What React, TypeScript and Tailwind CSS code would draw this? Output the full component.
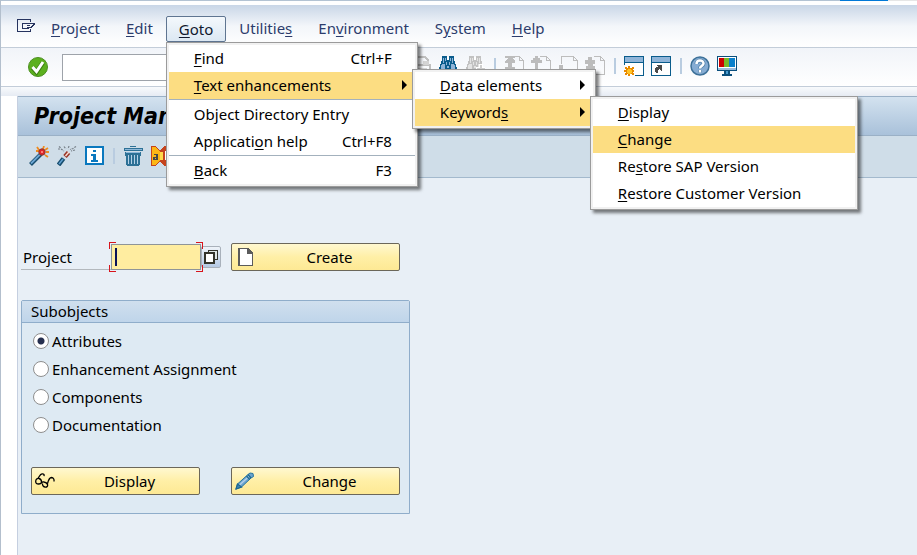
import React, { useState } from "react";

function Svg({ children, className = "", w = 20, h = 20, crisp = true }: { children: React.ReactNode; className?: string; w?: number; h?: number; crisp?: boolean }) {
  return (
    <svg width={w} height={h} viewBox={`0 0 ${w} ${h}`} fill="none" shapeRendering={crisp ? "crispEdges" : "auto"} className={`shrink-0 ${className}`} aria-hidden="true">
      {children}
    </svg>
  );
}

const CommandIcon = () => (
  <Svg w={18} h={14}>
    <path d="M13.500 3V.5H.5v12h13V10" stroke="#26335f" />
    <path d="M5.500 9.500v-5h12v1h-1v1h-1v1h-1v1h-4.500M5.500 9.500h6v-2M10 6.500h3" stroke="#26335f" />
  </Svg>
);

const CheckIcon = () => (
  <Svg crisp={false}>
    <circle cx="10" cy="10" r="9.500" fill="#5cb01e" stroke="#4c8f22" />
    <path d="M4.500 10.500l4 4.500 6.500-9.500" stroke="#3c7d12" strokeWidth="4.500" />
    <path d="M4.500 10l4 4.500 6.500-9.500" stroke="#fff" strokeWidth="3" />
  </Svg>
);

const PrinterIcon = () => (
  <Svg>
    <path d="M5.500 6.500v-6h8l3 3v3M1.500 8.500h17v8h-17z" stroke="#c0c0c0" strokeWidth="2" />
    <path d="M12 5h6v4h-6zM4 12h12v7H4z" fill="#d4d4d4" />
  </Svg>
);

function Binoculars({ dark, light, plus }: { dark: string; light: string; plus?: boolean }) {
  return (
    <Svg>
      <path d="M4 0h5v4h2V0h5v5h1v3h1v3h1v8h-7v-5H8v5H1v-8h1V8h1V5h1z" fill={dark} />
      <path d="M5 2h1v5H5zM7 2h1v3H7zM12 2h1v3h-1zM14 2h1v5h-1zM4 8h3v5H3V9h1zM13 8h3v1h1v4h-4zM8 6h1v3H8zM11 6h1v3h-1zM9 10h2v2H9zM3 14h3v3H3zM14 14h3v3h-3z" fill={light} />
      <path d="M9 1h2v3H9z" fill="#fff" />
      {plus && <path d="M14 8h3v3h3v3h-3v3h-3v-3h-3v-3h3z" fill="#cfcfcf" stroke="#fff" strokeWidth="1" />}
    </Svg>
  );
}

function PageIcon({ kind }: { kind: "first" | "prev" | "next" | "last" }) {
  return (
    <Svg>
      <path d="M9 .5h6.500l4 4V18.500H6v-2M15.500.5v4h4" stroke="#bdbdbd" />
      {kind === "first" && <path d="M1 0h10v2H8l3 3v2H8v4H4V7H1V5l3-3H1zM4 9h4v2h3v4H1v-4h3z" fill="#bcbcbc" />}
      {kind === "prev" && <path d="M4 0h3v2h2v2h2v3H7v6H4V7H0V4h2V2h2z" fill="#bcbcbc" />}
      {kind === "next" && <path d="M3.500 8V.5H10" stroke="#bdbdbd" />}
      {kind === "next" && <path d="M1 9h4v7h4v2H0v-2h1z" fill="#bcbcbc" />}
      {kind === "last" && <path d="M3 1h4v3h3v4H8v2h2v3H1v-3h2V8H0V4h3z" fill="#bcbcbc" />}
    </Svg>
  );
}

const NewSessionIcon = () => (
  <Svg>
    <path d="M1 1h18v18H1z" fill="#fff" />
    <path d="M1 1h18v5H1z" fill="#8fb4d8" />
    <path d="M.5 9V.5h19v19H11M1 6.500h18" stroke="#0a5c8c" />
    <path d="M4 10h2v2h2v-1h2v2H9v1h1v2H9v1h1v2H8v-1H6v2H4v-2H3v1H1v-2h1v-1H0v-2h2v-1H1v-2h2v1h1z" fill="#e88a00" />
    <path d="M4 13h3v1h1v3H7v1H4v-1H3v-3h1z" fill="#ffc425" />
  </Svg>
);

const ShortcutIcon = () => (
  <Svg>
    <path d="M.5.5h19v19H.5z" fill="#fff" stroke="#0a5c8c" />
    <path d="M1 1h18v5H1z" fill="#8fb4d8" />
    <path d="M1 6.500h18" stroke="#0a5c8c" />
    <path d="M5 9h6v6h-1v-1H9v-1H8v1H7v3H5v-1H4v-4h1v-1h2v-1H6v-1H5z" fill="#4a4a4a" />
  </Svg>
);

const HelpIcon = () => (
  <Svg crisp={false}>
    <circle cx="10" cy="10" r="9" fill="#86acd3" stroke="#3d7199" strokeWidth="1.500" />
    <path d="M6.500 8c0-4.500 7-4.500 7-.5 0 2.500-3.500 2.300-3.500 5M10 14v2.500" stroke="#4d7ea8" strokeWidth="4" />
    <path d="M6.500 8c0-4.500 7-4.500 7-.5 0 2.500-3.500 2.300-3.500 5M10 14v2.500" stroke="#fff" strokeWidth="2.500" />
  </Svg>
);

const MonitorIcon = () => (
  <Svg>
    <path d="M.5.500h19v13H.5z" fill="#fff" stroke="#0a4f7d" />
    <path d="M2 2h6v9H2z" fill="#cc0000" />
    <path d="M7 2h5v9H7z" fill="#76b82a" />
    <path d="M12 2h6v9h-6z" fill="#0a80cc" />
    <path d="M1 12h18v2H1z" fill="#9cbcdc" />
    <path d="M0 14h20v1H0zM7 15h6v3h2v2H5v-2h2z" fill="#0a4f7d" />
    <path d="M9 15h2v3H9z" fill="#4a9bd0" />
  </Svg>
);

const WandIcon = () => (
  <Svg crisp={false}>
    <path d="M1.500 18.500L12 8" stroke="#174d6e" strokeWidth="4" />
    <path d="M2 17.500L11 8.500" stroke="#6da6d4" strokeWidth="1.800" />
    <path d="M8 1l2 3M15 0l-1 3M19 2l-3 2M20 6h-3M19 11l-3-2M7 5h3" stroke="#f08b1d" strokeWidth="1.800" />
    <circle cx="13" cy="6" r="3.200" fill="#e0242b" stroke="#8d3a2c" />
    <circle cx="13" cy="6" r="1" fill="#ff9b8c" />
  </Svg>
);

const WandOffIcon = () => (
  <Svg crisp={false}>
    <path d="M1.500 19l5-6.500" stroke="#174d6e" strokeWidth="4.500" />
    <path d="M2 18l4-5" stroke="#5f9fd0" strokeWidth="1.500" />
    <path d="M8 10.500l3.500-4" stroke="#9a3424" strokeWidth="4.500" />
    <path d="M8.500 10l3.500-4" stroke="#f6dcd4" strokeWidth="1.500" />
    <path d="M2 .5l2 1.500M7 .5L9 3M1 3h3l3 2M12 0l-1 3M19 .5l-3 2-3 1M18 4l-4 1" stroke="#767f87" strokeWidth="1.200" strokeDasharray="2 1" />
  </Svg>
);

const InfoIcon = () => (
  <Svg>
    <path d="M1 1h17v17H1z" fill="#fff" stroke="#0a78be" strokeWidth="2" />
    <path d="M8 4h3v2H8zM6 8h5v6h2v2H6v-2h2v-4H6z" fill="#0a78be" />
  </Svg>
);

const TrashIcon = () => (
  <Svg>
    <path d="M2 6h16v4h-1v9h-1v1H4v-1H3v-9H2z" fill="#2d7196" />
    <path d="M7 .5h6M1 2.500h18v2H1z" fill="#8db8da" stroke="#2d7196" />
    <path d="M5.500 9v9M8.500 9v9M11.500 9v9M14.500 9v9" stroke="#b5d1e7" />
    <path d="M3 6.500h14" stroke="#8db8da" />
  </Svg>
);

const RenameIcon = () => (
  <Svg>
    <path d="M0 0h4l4 4h1l4-4h7v20h-7l-4-4H8l-4 4H0z" fill="#c5431d" />
    <path d="M1 1h3l5 5v8l-5 5H1z" fill="#fcb614" />
    <path d="M9 6h3v8H9z" fill="#ffd94a" />
    <path d="M3 8h4v6H2v-3h3V9H3zM4 12v1h1v-1z" fill="#474747" />
    <path d="M14 5h2v3h3v6h-5zM16 10v2h1v-2z" fill="#fff" />
  </Svg>
);

const NewPageIcon = () => (
  <Svg w={15} h={18}>
    <path d="M1 1h9l4 4v12H1z" fill="#fff" />
    <path d="M0 0h10l5 5v13H0zM2 1v16h12V6H9V1z" fill="#5b5b5b" fillRule="evenodd" />
  </Svg>
);

const GlassesIcon = () => (
  <Svg crisp={false} h={16}>
    <path d="M.7 8.500c0-2 1.500-3.500 3.300-3 2 .5 2.500 2 2.500 3.500s-1.500 2-3 2S.7 10.500.7 8.500zM3 5.500C4.500 3.500 5 1 7 .8s2.300 1 2 2.400M6.500 10c.5-1 1.300-1.300 2.500-1 1.500.2 3 1 3.500 2.500.5 1.700-.7 2.700-2.200 2.600-1.800-.1-3-1.600-2.800-3.600M12.500 10.500c.8-3 2-6 4-6 2 .200 2.800 1.700 2.500 4" stroke="#000" strokeWidth="1.300" />
  </Svg>
);

const PencilIcon = () => (
  <Svg crisp={false} h={18}>
    <path d="M1 17l1.500-5L13 2.500 15 1l3 .5.500 3L16 6 6.500 15z" fill="#6ba4cf" stroke="#27759f" />
    <path d="M4.500 13L14.500 4" stroke="#b3d0ea" strokeWidth="1.500" />
    <path d="M1 17l1.500-5L6.500 15zM13 2.500L16 6M11.500 4l3.200 3.500" stroke="#1d6890" fill="#3f87b4" strokeWidth="1.200" />
  </Svg>
);

const MatchcodeIcon = () => (
  <Svg w={14} h={14}>
    <path d="M4.500.5h9v9h-9z" fill="#dfe6e6" stroke="#33332b" />
    <path d="M1 3h9v10H1z" fill="#fff" stroke="#33332b" strokeWidth="2" />
  </Svg>
);

/** Renders a caption in which the letter after "&" is the underlined access key. */
function Caption({ text }: { text: string }) {
  const i = text.indexOf("&");
  if (i < 0) return <span>{text}</span>;
  return (
    <span>
      {text.slice(0, i)}
      <u className="underline-offset-2 decoration-1">{text[i + 1]}</u>
      {text.slice(i + 2)}
    </span>
  );
}

type Entry = { label: string; keys?: string; sep?: boolean; active?: boolean; arrow?: boolean; sub?: React.ReactNode };

function Menu({ entries, className }: { entries: Entry[]; className: string }) {
  return (
    <div className={`absolute z-10 border border-[#9b9b9b] bg-[#f1f1f1] p-[2px] shadow-[3px_3px_3px_0px_#00000080] ${className}`}>
      <ul role="menu" className="bg-white">
        {entries.map((e) => (
          <li key={e.label} role="none" className={`relative ${e.sep ? "mb-px border-b border-[#a3b1bd]" : ""}`}>
            <button role="menuitem" type="button" className={`flex h-[27px] w-full items-center pl-[25px] text-left text-black ${e.arrow ? "pr-2" : "pr-[23px]"} ${e.active ? "bg-[#fcdd82]" : ""}`}>
              <span className="flex-1 whitespace-nowrap"><Caption text={e.label} /></span>
              {e.keys && <span>{e.keys}</span>}
              {e.arrow && (
                <Svg w={5} h={10} crisp={false}>
                  <path d="M0 0l5 5-5 5z" fill="#000" />
                </Svg>
              )}
            </button>
            {e.sub}
          </li>
        ))}
      </ul>
    </div>
  );
}

const keywordsMenu = (
  <Menu
    className="left-[175px] top-[-3px] w-[268px]"
    entries={[{ label: "&Display" }, { label: "&Change", active: true }, { label: "Re&store SAP Version" }, { label: "&Restore Customer Version" }]}
  />
);

const textMenu = (
  <Menu
    className="left-[243px] top-[-3px] w-[184px]"
    entries={[{ label: "&Data elements", arrow: true }, { label: "Keyword&s", active: true, arrow: true, sub: keywordsMenu }]}
  />
);

const gotoMenu = (
  <Menu
    className="left-0 top-[26px] w-[252px]"
    entries={[
      { label: "&Find", keys: "Ctrl+F" },
      { label: "&Text enhancements", active: true, sep: true, arrow: true, sub: textMenu },
      { label: "Object Directory Entry" },
      { label: "Applicati&on help", keys: "Ctrl+F8", sep: true },
      { label: "&Back", keys: "F3" },
    ]}
  />
);

function ToolButton({ label, children }: { label: string; children: React.ReactNode }) {
  return <button type="button" aria-label={label} className="shrink-0">{children}</button>;
}

function Divider({ className = "" }: { className?: string }) {
  return <span className={`h-4 w-[2px] shrink-0 bg-[#b9cce0] ${className}`} />;
}

function YellowButton({ icon, children }: { icon: React.ReactNode; children: React.ReactNode }) {
  return (
    <button type="button" className="flex h-7 w-[169px] items-center rounded-xs border border-[#6b675a] bg-linear-to-b from-[#fff8d0] via-[#ffefa6] to-[#fde994] px-[3px] text-black">
      <span className="flex w-5 justify-center">{icon}</span>
      <span className="flex-1 pl-2 text-center">{children}</span>
    </button>
  );
}

const menus = ["&Project", "&Edit", "&Goto", "Utilitie&s", "En&vironment", "S&ystem", "&Help"];
const subobjects = ["Attributes", "Enhancement Assignment", "Components", "Documentation"];

export default function App() {
  const [choice, setChoice] = useState("Attributes");
  return (
    <div className="flex min-h-screen flex-col overflow-hidden border-l border-[#b3bfcd] bg-white font-['Noto_Sans','Open_Sans',sans-serif] text-[15px] leading-5 text-black">
      <div className="flex h-px bg-[#b3c3d3]">
        <span className="ml-auto w-12 bg-[#0078d7]" />
        <span className="w-[29px] bg-[#e6e6e6]" />
      </div>
      <nav className="mt-1 flex h-[42px] items-center bg-linear-to-b from-[#c9d6e7] via-[#f3f6fa] via-50% to-white pl-4">
        <button type="button" aria-label="Menu" className="mb-0"><CommandIcon /></button>
        <ul className="ml-[3px] flex pt-[5px]">
          {menus.map((m) => (
            <li key={m} className="relative">
              <button
                type="button"
                className={`flex h-[26px] items-center rounded-xs border px-3 ${m === "&Goto" ? "border-[#5f7591] bg-linear-to-b from-[#f4f8fc] to-[#dce8f3] text-[#10182e]" : "border-transparent pb-px text-[#2c3c6c]"}`}
              >
                <Caption text={m} />
              </button>
              {m === "&Goto" && gotoMenu}
            </li>
          ))}
        </ul>
      </nav>
      <div className="flex h-10 items-center gap-[7px] border-y border-[#c3cdd9] bg-linear-to-b from-[#f1f4f9] to-white pl-[27px]">
        <ToolButton label="Enter"><CheckIcon /></ToolButton>
        <input aria-label="Command" className="ml-[7px] h-[27px] w-[342px] border border-[#9ea3aa] bg-white px-1" />
        <div className="flex items-center gap-[7px] pb-[2px]">
          <ToolButton label="Print"><PrinterIcon /></ToolButton>
          <ToolButton label="Find"><Binoculars dark="#0a5c8c" light="#8fb4d8" /></ToolButton>
          <ToolButton label="Find next"><Binoculars dark="#c2c2c2" light="#e4e4e4" plus /></ToolButton>
          <Divider className="ml-[2px] mr-px" />
          <ToolButton label="First page"><PageIcon kind="first" /></ToolButton>
          <ToolButton label="Previous page"><PageIcon kind="prev" /></ToolButton>
          <ToolButton label="Next page"><PageIcon kind="next" /></ToolButton>
          <ToolButton label="Last page"><PageIcon kind="last" /></ToolButton>
          <Divider className="ml-[2px] mr-px" />
          <ToolButton label="New session"><NewSessionIcon /></ToolButton>
          <ToolButton label="Create shortcut"><ShortcutIcon /></ToolButton>
          <Divider className="ml-[2px] mr-px" />
          <ToolButton label="Help"><HelpIcon /></ToolButton>
          <ToolButton label="Customize layout"><MonitorIcon /></ToolButton>
        </div>
      </div>
      <div className="h-[9px] bg-linear-to-b from-[#f8fafc] to-[#e6ebf3]" />
      <div className="ml-4 flex flex-1 flex-col border-l border-[#c5cfe0] bg-[#e8eff6]">
        <header className="flex h-10 items-center border-y border-[#9ab0c6] bg-linear-to-b from-[#d3e2ef] to-[#a9c1da] pl-4">
          <h1 className="font-['DejaVu_Sans_Condensed','DejaVu_Sans',sans-serif] text-[23px] font-bold italic leading-7">Project Management</h1>
        </header>
        <div className="flex h-[42px] items-center gap-2 border-b border-[#a3b9cd] bg-[#cfdde8] pb-[2px] pl-[11px]">
          <ToolButton label="Activate"><WandIcon /></ToolButton>
          <ToolButton label="Deactivate"><WandOffIcon /></ToolButton>
          <ToolButton label="Information"><InfoIcon /></ToolButton>
          <Divider />
          <ToolButton label="Delete"><TrashIcon /></ToolButton>
          <ToolButton label="Rename"><RenameIcon /></ToolButton>
        </div>
        <main className="flex flex-col items-start gap-[29px] pl-[3px] pt-[65px]">
          <div className="flex items-center">
            <label htmlFor="project" className="flex h-[26px] w-[90px] items-center border-b border-[#b3b8bd] pl-[2px]">Project</label>
            <div className="relative">
              <input id="project" className="block h-[26px] w-[90px] border border-[#8f9598] bg-[#ffeda0] px-1" />
              <span className="absolute left-1 top-[4px] h-[18px] w-[2px] bg-[#0b1258]" />
              <svg className="absolute left-[-2px] top-[-2px]" width="94" height="30" viewBox="0 0 94 30" fill="none" shapeRendering="crispEdges" aria-hidden="true">
                <path d="M.5 7V.5H7M87 .5h6.500V7M.5 23v6.500H7M87 29.500h6.500V23" stroke="#d8141c" />
              </svg>
            </div>
            <button type="button" aria-label="Possible entries" className="flex h-[22px] w-5 items-center justify-center rounded-xs border border-[#a9b1bb] bg-linear-to-b from-[#eef3f9] to-[#b5c9e4]">
              <MatchcodeIcon />
            </button>
            <div className="ml-[10px]">
              <YellowButton icon={<NewPageIcon />}>Create</YellowButton>
            </div>
          </div>
          <section role="radiogroup" aria-labelledby="subobjects" className="w-[389px] rounded-t-xs border border-[#8fadca] bg-[#deeaf3]">
            <h2 id="subobjects" className="h-[22px] border-b border-[#8fadca] bg-linear-to-b from-[#d0dfee] to-[#bfd5ea] pl-[9px]">Subobjects</h2>
            <div className="flex flex-col gap-2 pl-[11px] pt-2">
              {subobjects.map((s) => (
                <label key={s} className="flex h-5 items-center gap-[3px]">
                  <input
                    type="radio"
                    name="subobject"
                    checked={choice === s}
                    onChange={() => setChoice(s)}
                    className="size-4 appearance-none rounded-full border border-[#8e8e8e] bg-white checked:bg-[radial-gradient(circle,#26304f_3px,#fff_4px)]"
                  />
                  {s}
                </label>
              ))}
            </div>
            <div className="flex gap-[31px] pb-[18px] pl-[9px] pt-8">
              <YellowButton icon={<GlassesIcon />}>Display</YellowButton>
              <YellowButton icon={<PencilIcon />}>Change</YellowButton>
            </div>
          </section>
        </main>
      </div>
    </div>
  );
}
